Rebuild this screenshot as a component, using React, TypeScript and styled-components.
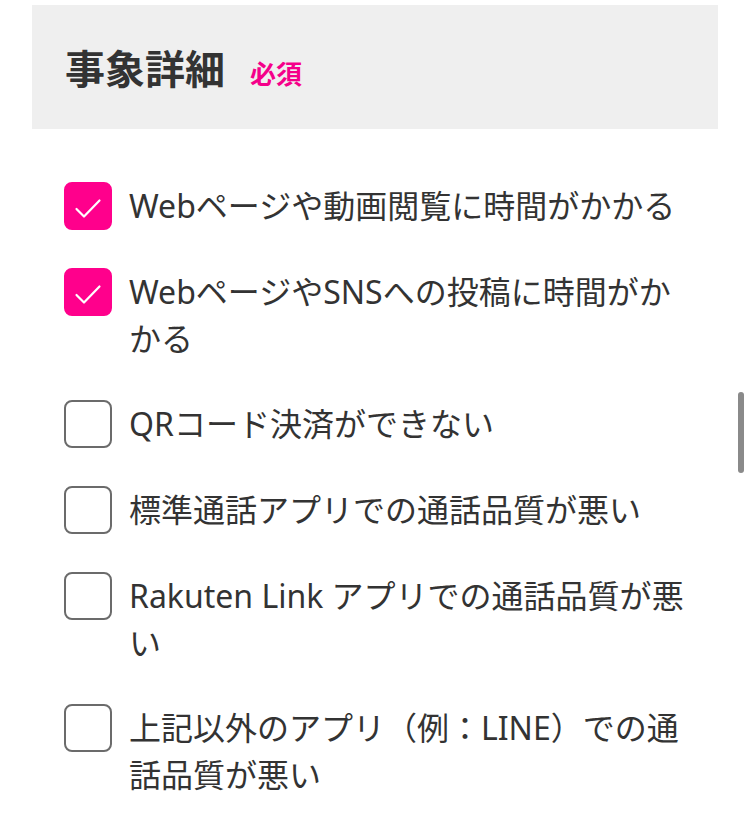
import React from "react";
import styled, { createGlobalStyle } from "styled-components";

const GlobalStyle = createGlobalStyle`
  html, body {
    margin: 0;
    padding: 0;
    background: #ffffff;
  }
  body {
    font-family: "Noto Sans", "Noto Sans CJK JP", sans-serif;
    color: #333333;
  }
`;

const Page = styled.div`
  position: relative;
  width: 750px;
  height: 821px;
  overflow: hidden;
  padding: 5px 32px 0;
  box-sizing: border-box;
`;

const Header = styled.div`
  height: 124px;
  background: #efefef;
  display: flex;
  align-items: baseline;
  padding: 0 0 0 33px;
  box-sizing: border-box;
  gap: 25px;
  line-height: 124px;
`;

const Title = styled.h2`
  margin: 0;
  font-size: 40px;
  font-weight: 700;
  color: #333333;
  letter-spacing: 0;
  font-family: "Noto Sans CJK JP", sans-serif;
`;

const Required = styled.span`
  font-size: 26px;
  font-weight: 700;
  color: #f5008a;
  font-family: "Noto Sans CJK JP", sans-serif;
`;

const List = styled.ul`
  list-style: none;
  margin: 0;
  padding: 53px 32px 0;
  display: flex;
  flex-direction: column;
  gap: 38px;
`;

const Item = styled.li`
  display: flex;
  align-items: flex-start;
  gap: 17px;
`;

const Box = styled.span<{ $checked: boolean }>`
  flex: 0 0 auto;
  width: 48px;
  height: 48px;
  box-sizing: border-box;
  border-radius: 8px;
  border: 2px solid ${(p) => (p.$checked ? "#ff008c" : "#6b6b6b")};
  background: ${(p) => (p.$checked ? "#ff008c" : "#ffffff")};
  display: flex;
  align-items: center;
  justify-content: center;
`;

const Label = styled.span`
  font-size: 32px;
  line-height: 47px;
  color: #333333;
  font-family: "Noto Sans", "Noto Sans CJK JP", sans-serif;
`;

const Scrollbar = styled.div`
  position: absolute;
  right: 6px;
  top: 392px;
  width: 6px;
  height: 81px;
  border-radius: 3px;
  background: #8a8a8a;
`;

const Check = () => (
  <svg width="48" height="48" viewBox="0 0 48 48" style={{ margin: -2 }}>
    <path
      d="M12.5 27 L20 34.5 L35.5 18.5"
      fill="none"
      stroke="#ffffff"
      strokeWidth="2.2"
      strokeLinecap="round"
      strokeLinejoin="round"
    />
  </svg>
);

const items: { label: string; checked: boolean }[] = [
  { label: "Webページや動画閲覧に時間がかかる", checked: true },
  { label: "WebページやSNSへの投稿に時間がかかる", checked: true },
  { label: "QRコード決済ができない", checked: false },
  { label: "標準通話アプリでの通話品質が悪い", checked: false },
  { label: "Rakuten Link アプリでの通話品質が悪い", checked: false },
  { label: "上記以外のアプリ（例：LINE）での通話品質が悪い", checked: false },
];

export default function App() {
  return (
    <>
      <GlobalStyle />
      <Page>
        <Header>
          <Title>事象詳細</Title>
          <Required>必須</Required>
        </Header>
        <List>
          {items.map((it) => (
            <Item key={it.label}>
              <Box $checked={it.checked}>{it.checked && <Check />}</Box>
              <Label>{it.label}</Label>
            </Item>
          ))}
        </List>
        <Scrollbar />
      </Page>
    </>
  );
}
